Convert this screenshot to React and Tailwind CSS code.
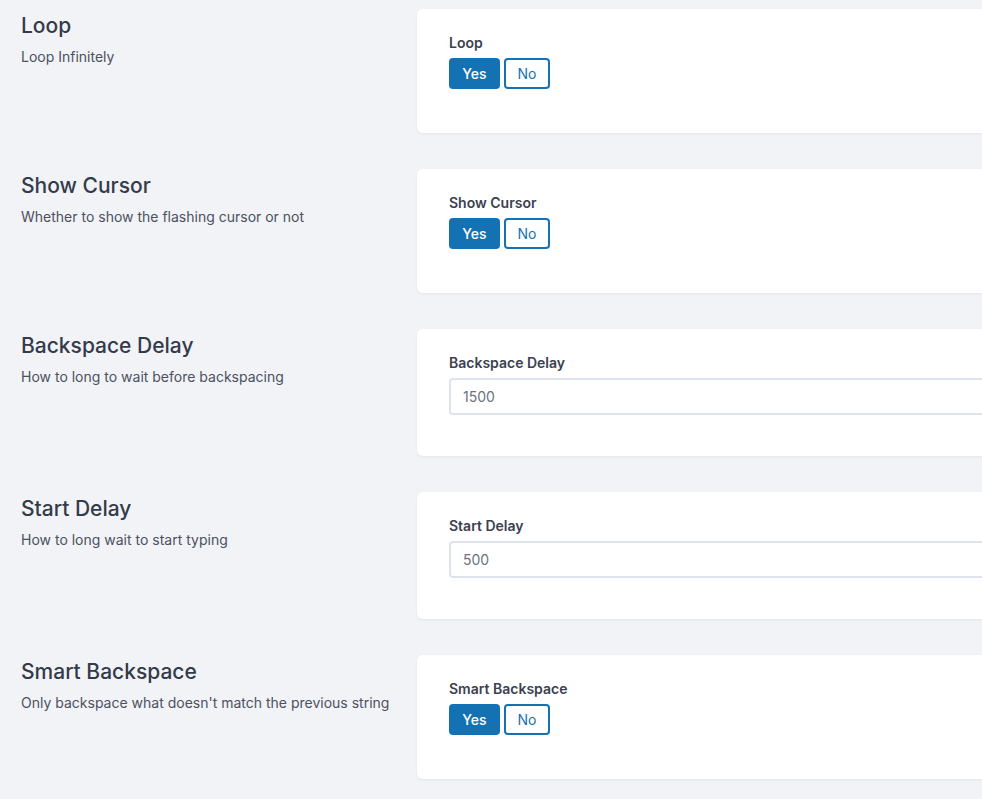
import React from "react";

const rows = [
  { title: "Loop", desc: "Loop Infinitely", type: "toggle" },
  { title: "Show Cursor", desc: "Whether to show the flashing cursor or not", type: "toggle" },
  { title: "Backspace Delay", desc: "How to long to wait before backspacing", type: "input", value: "1500" },
  { title: "Start Delay", desc: "How to long wait to start typing", type: "input", value: "500" },
  { title: "Smart Backspace", desc: "Only backspace what doesn't match the previous string", type: "toggle" },
];

function Toggle() {
  return (
    <div className="flex gap-[4px]">
      <button className="h-[31px] w-[51px] rounded-[4px] bg-[#1572b2] text-[14px] font-medium text-white">Yes</button>
      <button className="h-[31px] w-[46px] rounded-[4px] border-[2px] border-[#1572b2] bg-white text-[14px] text-[#1572b2]">No</button>
    </div>
  );
}

function Field({ value }) {
  return (
    <div className="h-[37px] w-[560px] rounded-[4px] border-[2px] border-[#dfe3ee] bg-white px-[12px] flex items-center text-[14px] text-[#6b7280]">
      {value}
    </div>
  );
}

export default function App() {
  return (
    <div
      className="w-[982px] h-[799px] overflow-hidden bg-[#f2f3f7] pt-[9px]"
      style={{ fontFamily: '"Inter", "Noto Sans", sans-serif' }}
    >
      <div className="flex flex-col gap-[36px]">
        {rows.map((r) => (
          <div key={r.title} className="flex">
            <div className="w-[417px] shrink-0 pl-[21px] pt-[3px]">
              <h2 className="text-[21px] leading-[28px] font-medium text-[#333b4a]">{r.title}</h2>
              <p className="mt-[7px] text-[14px] leading-[20px] text-[#4b5160]">{r.desc}</p>
            </div>
            <div
              className={`w-[620px] shrink-0 rounded-[6px] bg-white pl-[32px] pt-[24px] shadow-[0_1px_3px_rgba(0,0,0,0.06)] ${
                r.type === "input" ? "h-[127px]" : "h-[124px]"
              }`}
            >
              <div className="text-[14px] leading-[20px] font-semibold text-[#3a4150]">{r.title}</div>
              <div className="mt-[5px]">
                {r.type === "toggle" ? <Toggle /> : <Field value={r.value} />}
              </div>
            </div>
          </div>
        ))}
      </div>
    </div>
  );
}
